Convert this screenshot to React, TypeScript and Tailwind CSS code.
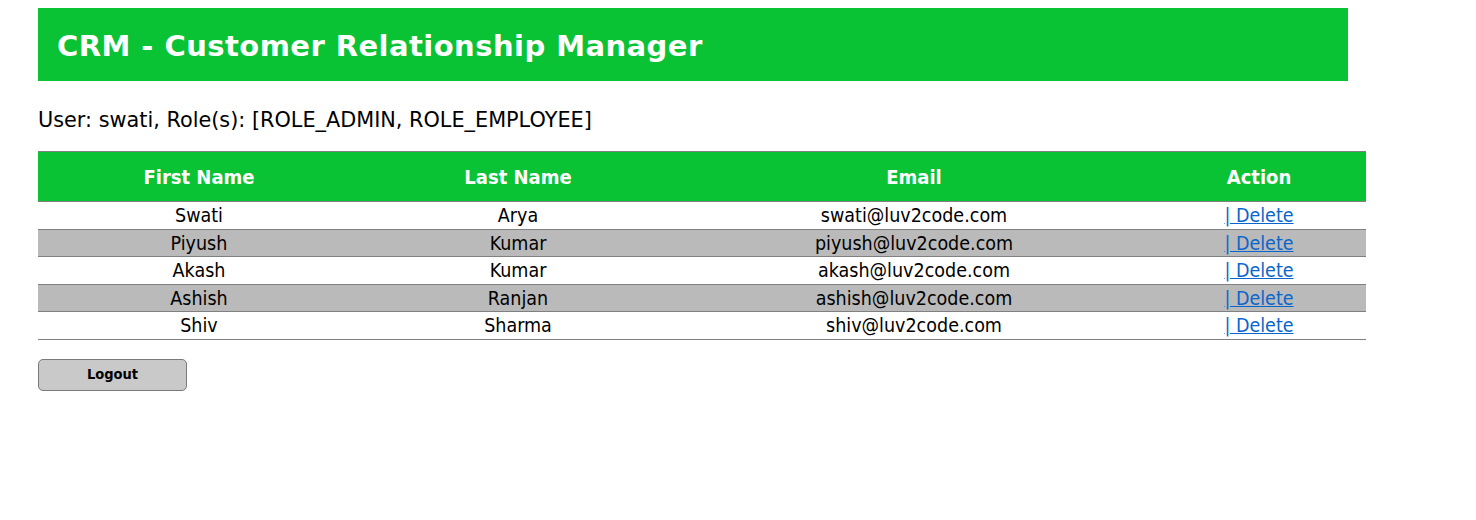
import React from "react";

const rows = [
  { first: "Swati", last: "Arya", email: "swati@luv2code.com" },
  { first: "Piyush", last: "Kumar", email: "piyush@luv2code.com" },
  { first: "Akash", last: "Kumar", email: "akash@luv2code.com" },
  { first: "Ashish", last: "Ranjan", email: "ashish@luv2code.com" },
  { first: "Shiv", last: "Sharma", email: "shiv@luv2code.com" },
];

export default function App() {
  return (
    <div
      className="min-h-[520px] bg-white pt-2 pl-[38px] text-black"
      style={{ fontFamily: "Tahoma, 'DejaVu Sans Condensed', 'DejaVu Sans', sans-serif" }}
    >
      <div className="flex h-[73px] w-[1310px] items-center bg-[#09c335] pl-[19px] pt-[3px]">
        <h2
          className="text-[29px] font-bold leading-none tracking-[0.45px] text-white"
          style={{ fontFamily: "'DejaVu Sans', sans-serif" }}
        >
          CRM - Customer Relationship Manager
        </h2>
      </div>

      <p
        className="mt-[27px] text-[20.8px] leading-[24px]"
        style={{ fontFamily: "'DejaVu Sans', sans-serif" }}
      >
        User: swati, Role(s): [ROLE_ADMIN, ROLE_EMPLOYEE]
      </p>

      <table className="mt-[19px] w-[1328px] table-fixed border-collapse">
        <colgroup>
          <col className="w-[322px]" />
          <col className="w-[316px]" />
          <col className="w-[476px]" />
          <col className="w-[214px]" />
        </colgroup>
        <thead>
          <tr className="border-y border-[#808080] bg-[#09c335]">
            <th className="h-[50px] p-0 text-center text-[20px] font-bold text-white">First Name</th>
            <th className="h-[50px] p-0 text-center text-[20px] font-bold text-white">Last Name</th>
            <th className="h-[50px] p-0 text-center text-[20px] font-bold text-white">Email</th>
            <th className="h-[50px] p-0 text-center text-[20px] font-bold text-white">Action</th>
          </tr>
        </thead>
        <tbody>
          {rows.map((r, i) => (
            <tr
              key={r.email}
              className={`border-b border-[#808080] ${i % 2 === 1 ? "bg-[#bababa]" : "bg-white"}`}
            >
              <td className="h-[27.5px] p-0 pt-[2px] text-center text-[19.5px] leading-[22px]">{r.first}</td>
              <td className="h-[27.5px] p-0 pt-[2px] text-center text-[19.5px] leading-[22px]">{r.last}</td>
              <td className="h-[27.5px] p-0 pt-[2px] text-center text-[19.5px] leading-[22px]">{r.email}</td>
              <td className="h-[27.5px] p-0 pt-[2px] text-center text-[19.5px] leading-[22px]">
                <a href="#" className="text-[#0a66cc] underline">
                  | Delete
                </a>
              </td>
            </tr>
          ))}
        </tbody>
      </table>

      <button className="mt-[19px] h-[32px] w-[149px] rounded-[5px] border border-[#7a7a7a] bg-[#c9c9c9] text-[14.5px] font-bold text-black">
        Logout
      </button>
    </div>
  );
}
